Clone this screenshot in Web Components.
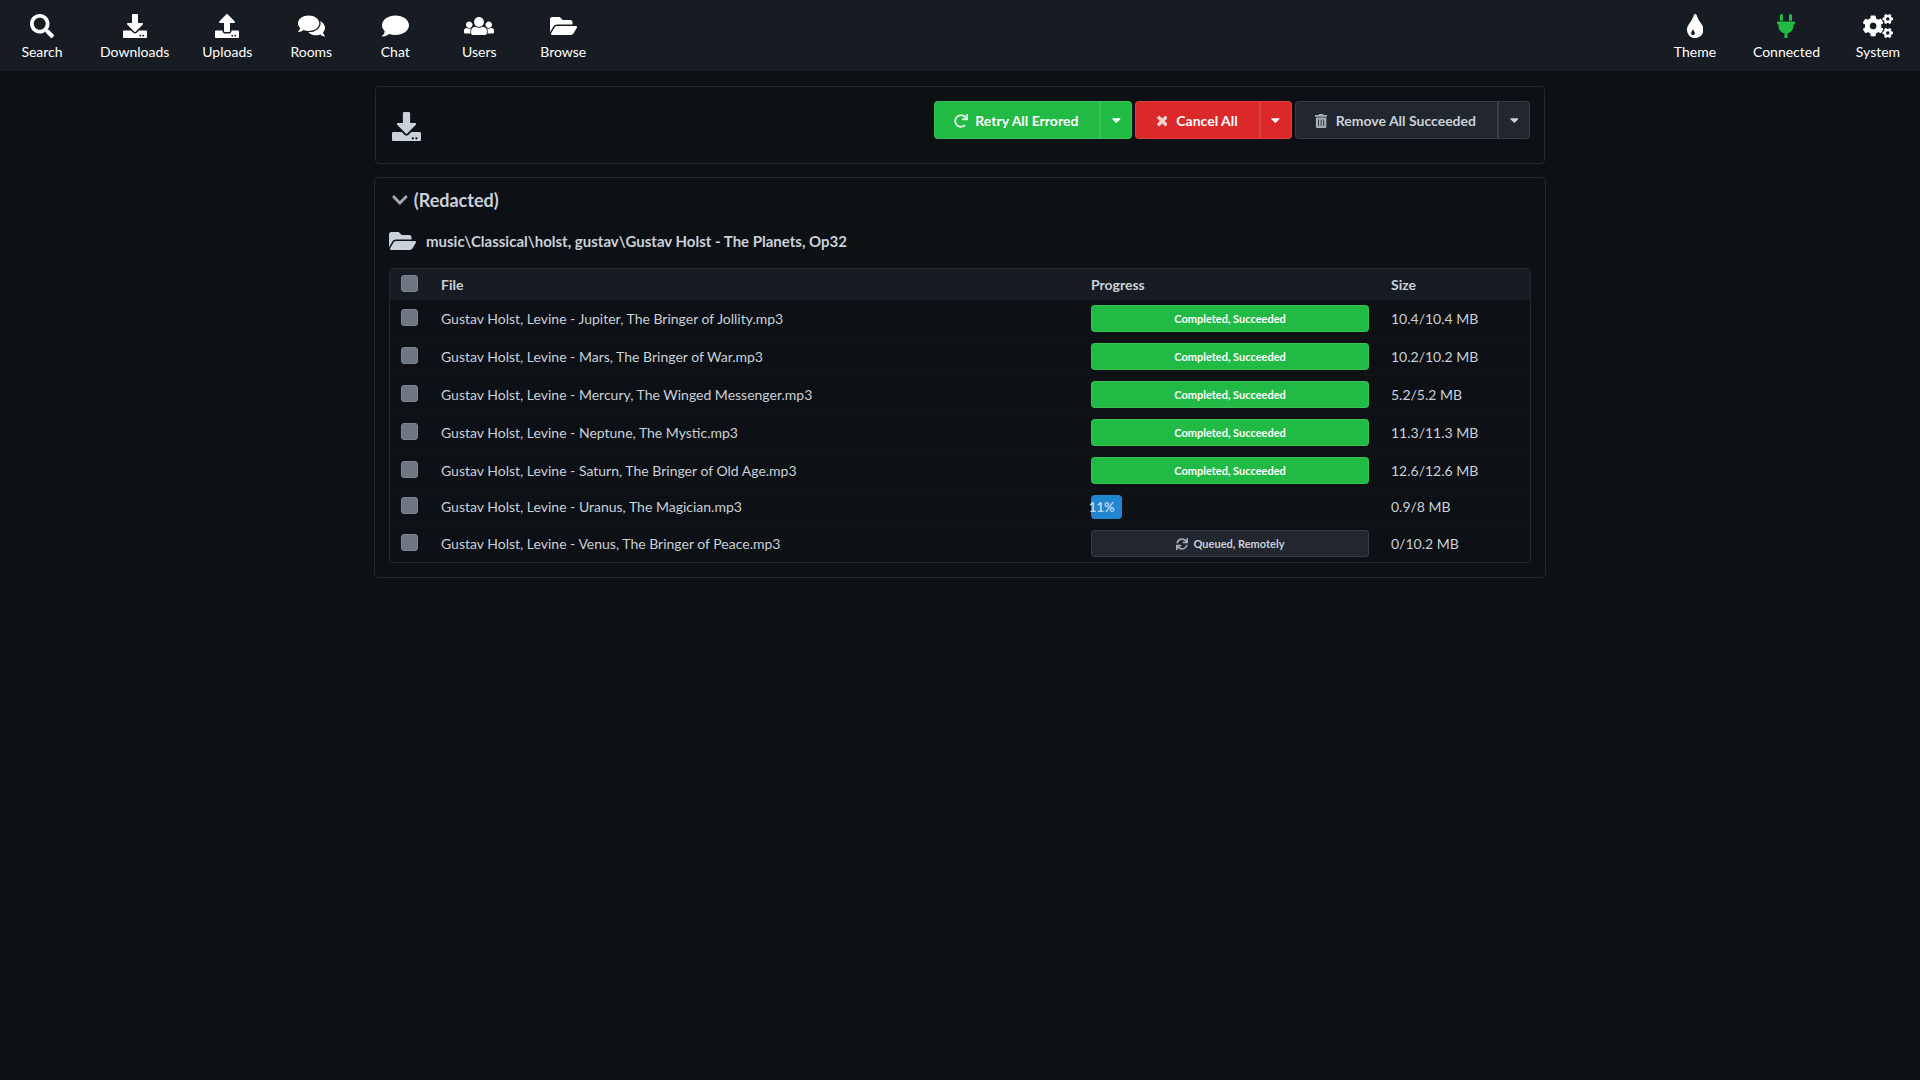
<!DOCTYPE html>
<html lang="en">
<head>
<meta charset="utf-8">
<meta name="viewport" content="width=device-width, initial-scale=1">
<title>Downloads</title>
<style>
  :root {
    --page: #0d1014;
    --raised: #171b22;
    --control: #22262e;
    --line: rgba(255, 255, 255, 0.1);
    --text: #c9d1d9;
    --green: #21ba45;
    --red: #db2828;
    --blue: #2185d0;
  }
  body {
    margin: 0;
    min-height: 100vh;
    background: var(--page);
    color: var(--text);
    font: 14px/18px Lato, "Liberation Sans", sans-serif;
  }
</style>
</head>
<body>
<app-shell>
  <nav-bar slot="nav">
    <nav-item icon="search" href="#search">Search</nav-item>
    <nav-item icon="download" href="#downloads">Downloads</nav-item>
    <nav-item icon="upload" href="#uploads">Uploads</nav-item>
    <nav-item icon="comments" href="#rooms">Rooms</nav-item>
    <nav-item icon="comment" href="#chat">Chat</nav-item>
    <nav-item icon="users" href="#users">Users</nav-item>
    <nav-item icon="folder" href="#browse">Browse</nav-item>
    <nav-item slot="end" icon="tint" href="#theme">Theme</nav-item>
    <nav-item slot="end" icon="plug" href="#connection" active>Connected</nav-item>
    <nav-item slot="end" icon="cogs" href="#system">System</nav-item>
  </nav-bar>
  <transfer-header>
    <split-button icon="redo" tone="green">Retry All Errored</split-button>
    <split-button icon="times" tone="red">Cancel All</split-button>
    <split-button icon="trash">Remove All Succeeded</split-button>
  </transfer-header>
  <user-card>
    <span slot="name">(Redacted)</span>
    <span slot="folder">music\Classical\holst, gustav\Gustav Holst - The Planets, Op32</span>
    <file-table></file-table>
  </user-card>
</app-shell>

<script>
const gear = 'M512.1 191l-8.2 14.3c-3 5.3-9.4 7.5-15.1 5.4-11.8-4.4-22.6-10.7-32.1-18.6-4.6-3.8-5.8-10.5-2.8-15.7l8.2-14.3c-6.9-8-12.3-17.3-15.9-27.4h-16.5c-6 0-11.2-4.3-12.2-10.3-2-12-2.1-24.6 0-37.1 1-6 6.2-10.4 12.2-10.4h16.5c3.6-10.1 9-19.4 15.9-27.4l-8.2-14.3c-3-5.2-1.9-11.9 2.8-15.7 9.5-7.9 20.4-14.2 32.1-18.6 5.7-2.1 12.1.1 15.1 5.4l8.2 14.3c10.5-1.9 21.2-1.9 31.7 0L552 6.3c3-5.3 9.4-7.5 15.1-5.4 11.8 4.4 22.6 10.7 32.1 18.6 4.6 3.8 5.8 10.5 2.8 15.7l-8.2 14.3c6.9 8 12.3 17.3 15.9 27.4h16.5c6 0 11.2 4.3 12.2 10.3 2 12 2.1 24.6 0 37.1-1 6-6.2 10.4-12.2 10.4h-16.5c-3.6 10.1-9 19.4-15.9 27.4l8.2 14.3c3 5.2 1.9 11.9-2.8 15.7-9.5 7.9-20.4 14.2-32.1 18.6-5.7 2.1-12.1-.1-15.1-5.4l-8.2-14.3c-10.4 1.9-21.2 1.9-31.7 0zm-10.5-58.8c38.5 29.6 82.4-14.3 52.8-52.8-38.5-29.7-82.4 14.3-52.8 52.8z';
const bubble = 'M576 240c0 115-129 208-288 208-48.3 0-93.9-8.6-133.9-23.8-40.3 31.2-89.8 50.3-142.4 55.7-5.2.6-10.2-2.8-11.5-7.7-1.3-5 2.7-8.1 6.6-11.8 19.3-18.4 42.7-32.8 51.9-94.6C21.9 330.9 0 287.3 0 240 0 125.1 129 32 288 32s288 93.1 288 208z';
const path = d => `<path d="${d}"/>`;

/* name: [view box width, drawing]; every icon is 512 units high */
const ICONS = {
  search: [512, path('M505 442.7L405.3 343c-4.5-4.5-10.6-7-17-7H372c27.6-35.3 44-79.7 44-128C416 93.1 322.9 0 208 0S0 93.1 0 208s93.1 208 208 208c48.3 0 92.7-16.4 128-44v16.3c0 6.4 2.5 12.5 7 17l99.7 99.7c9.4 9.4 24.6 9.4 33.9 0l28.3-28.3c9.4-9.4 9.4-24.6.1-34zM208 336c-70.7 0-128-57.2-128-128 0-70.7 57.2-128 128-128 70.7 0 128 57.2 128 128 0 70.7-57.2 128-128 128z')],
  download: [512, path('M216 0h80c13.3 0 24 10.7 24 24v168h87.7c17.8 0 26.7 21.5 14.1 34.1L269.7 378.3c-7.5 7.5-19.8 7.5-27.3 0L90.1 226.1c-12.6-12.6-3.7-34.1 14.1-34.1H192V24c0-13.3 10.7-24 24-24zm296 376v112c0 13.3-10.7 24-24 24H24c-13.3 0-24-10.7-24-24V376c0-13.3 10.7-24 24-24h146.7l49 49c20.1 20.1 52.5 20.1 72.6 0l49-49H488c13.3 0 24 10.7 24 24zm-124 88c0-11-9-20-20-20s-20 9-20 20 9 20 20 20 20-9 20-20zm64 0c0-11-9-20-20-20s-20 9-20 20 9 20 20 20 20-9 20-20z')],
  upload: [512, path('M296 384h-80c-13.3 0-24-10.7-24-24V192h-87.7c-17.8 0-26.7-21.5-14.1-34.1L242.3 5.7c7.5-7.5 19.8-7.5 27.3 0l152.2 152.2c12.6 12.6 3.7 34.1-14.1 34.1H320v168c0 13.3-10.7 24-24 24zm216-8v112c0 13.3-10.7 24-24 24H24c-13.3 0-24-10.7-24-24V376c0-13.3 10.7-24 24-24h136v8c0 30.9 25.1 56 56 56h80c30.9 0 56-25.1 56-56v-8h136c13.3 0 24 10.7 24 24zm-124 88c0-11-9-20-20-20s-20 9-20 20 9 20 20 20 20-9 20-20zm64 0c0-11-9-20-20-20s-20 9-20 20 9 20 20 20 20-9 20-20z')],
  comments: [576, `<mask id="m"><rect width="576" height="512" fill="#fff"/><path d="${bubble}" transform="translate(0 7) scale(.79)" fill="#000" stroke="#000" stroke-width="70"/></mask><path d="${bubble}" transform="translate(0 7) scale(.79)"/><g mask="url(#m)"><path d="${bubble}" transform="translate(576 106) scale(-.68 .78)"/></g>`],
  comment: [576, path(bubble)],
  users: [640, path('M320 64c57.99 0 105 47.01 105 105s-47.01 105-105 105-105-47.01-105-105S262.01 64 320 64zm113.463 217.366l-39.982-9.996c-49.168 35.365-108.766 27.473-146.961 0l-39.982 9.996C174.485 289.379 152 318.177 152 351.216V412c0 19.882 16.118 36 36 36h264c19.882 0 36-16.118 36-36v-60.784c0-33.039-22.485-61.837-54.537-69.85zM528 300c38.66 0 70-31.34 70-70s-31.34-70-70-70-70 31.34-70 70 31.34 70 70 70zm-416 0c38.66 0 70-31.34 70-70s-31.34-70-70-70-70 31.34-70 70 31.34 70 70 70zm24 112v-60.784c0-16.551 4.593-32.204 12.703-45.599-29.988 14.72-63.336 8.708-85.69-7.37l-26.655 6.664C14.99 310.252 0 329.452 0 351.477V392c0 13.255 10.745 24 24 24h112.169a52.417 52.417 0 0 1-.169-4zm467.642-107.09l-26.655-6.664c-27.925 20.086-60.89 19.233-85.786 7.218C499.369 318.893 504 334.601 504 351.216V412c0 1.347-.068 2.678-.169 4H616c13.255 0 24-10.745 24-24v-40.523c0-22.025-14.99-41.225-36.358-46.567z')],
  folder: [576, path('M572.694 292.093L500.27 416.248A63.997 63.997 0 0 1 444.989 448H45.025c-18.523 0-30.064-20.093-20.731-36.093l72.424-124.155A64 64 0 0 1 152 256h399.964c18.523 0 30.064 20.093 20.73 36.093zM152 224h328v-48c0-26.51-21.49-48-48-48H272l-64-64H48C21.49 64 0 85.49 0 112v278.046l69.077-118.418C86.214 242.25 117.989 224 152 224z')],
  tint: [352, '<path fill-rule="evenodd" d="M205.22 22.09c-7.94-28.78-49.44-30.12-58.44 0C100.01 179.85 0 222.72 0 333.91 0 432.35 78.72 512 176 512s176-79.65 176-178.09c0-111.75-99.79-153.34-146.78-311.82zM141 348c-4-13-22-13-26 0-8 25-27 38-27 62 0 22 18 38 40 38s40-16 40-38c0-24-19-37-27-62z"/>'],
  plug: [384, path('M256 144V32c0-17.673 14.327-32 32-32s32 14.327 32 32v112h-64zm112 16H16c-8.837 0-16 7.163-16 16v32c0 8.837 7.163 16 16 16h16v32c0 77.406 54.969 141.971 128 156.796V512h64v-99.204c73.031-14.825 128-79.39 128-156.796v-32h16c8.837 0 16-7.163 16-16v-32c0-8.837-7.163-16-16-16zm-240-16V32c0-17.673-14.327-32-32-32S64 14.327 64 32v112h64z')],
  cogs: [640, path(gear) + `<path d="${gear}" transform="translate(0 299)"/>` + path('M386.3 286.1l33.7 16.8c10.1 5.8 14.5 18.1 10.5 29.1-8.9 24.2-26.4 46.4-42.6 65.8-7.4 8.9-20.2 11.1-30.3 5.3l-29.1-16.8c-16 13.7-34.6 24.6-54.9 31.7v33.6c0 11.6-8.3 21.6-19.7 23.6-24.6 4.2-50.4 4.4-75.9 0-11.5-2-20-11.9-20-23.6V418c-20.3-7.2-38.9-18-54.9-31.7L74 403c-10 5.8-22.9 3.6-30.3-5.3-16.2-19.4-33.3-41.6-42.2-65.7-4-10.9.4-23.2 10.5-29.1l33.3-16.8c-3.9-20.9-3.9-42.4 0-63.4L12 205.8c-10.1-5.8-14.6-18.1-10.5-29 8.9-24.2 26-46.4 42.2-65.8 7.4-8.9 20.2-11.1 30.3-5.3l29.1 16.8c16-13.7 34.6-24.6 54.9-31.7V57.1c0-11.5 8.2-21.5 19.6-23.5 24.6-4.2 50.5-4.4 76-.1 11.5 2 20 11.9 20 23.6v33.6c20.3 7.2 38.9 18 54.9 31.7l29.1-16.8c10-5.8 22.9-3.6 30.3 5.3 16.2 19.4 33.2 41.6 42.1 65.8 4 10.9.1 23.2-10 29.1l-33.7 16.8c3.9 21 3.9 42.5 0 63.5zm-117.6 21.1c59.2-77-28.7-164.9-105.7-105.7-59.2 77 28.7 164.9 105.7 105.7z')],
  redo: [512, path('M500.33 0h-47.41a12 12 0 0 0-12 12.57l4 82.76A247.42 247.42 0 0 0 256 8C119.34 8 7.9 119.53 8 256.19 8.1 393.07 119.1 504 256 504a247.1 247.1 0 0 0 166.18-63.91 12 12 0 0 0 .48-17.43l-34-34a12 12 0 0 0-16.38-.55A176 176 0 1 1 402.1 157.8l-101.53-4.87a12 12 0 0 0-12.57 12v47.41a12 12 0 0 0 12 12h200.33a12 12 0 0 0 12-12V12a12 12 0 0 0-12-12z')],
  sync: [512, path('M440.65 12.57l4 82.77A247.16 247.16 0 0 0 255.83 8C134.73 8 33.91 94.92 12.29 209.82A12 12 0 0 0 24.09 224h49.05a12 12 0 0 0 11.67-9.26 175.91 175.91 0 0 1 317-56.94l-101.46-4.86a12 12 0 0 0-12.57 12v47.41a12 12 0 0 0 12 12H500a12 12 0 0 0 12-12V12a12 12 0 0 0-12-12h-47.37a12 12 0 0 0-11.98 12.57zM255.83 432a175.61 175.61 0 0 1-146-77.8l101.8 4.87a12 12 0 0 0 12.57-12v-47.4a12 12 0 0 0-12-12H12a12 12 0 0 0-12 12V500a12 12 0 0 0 12 12h47.35a12 12 0 0 0 12-12.6l-4.15-82.57A247.17 247.17 0 0 0 255.83 504c121.11 0 221.93-86.92 243.55-201.82a12 12 0 0 0-11.8-14.18h-49.05a12 12 0 0 0-11.67 9.26A175.86 175.86 0 0 1 255.83 432z')],
  times: [384, path('M323.1 441l53.9-53.9c9.4-9.4 9.4-24.5 0-33.9L279.8 256l97.2-97.2c9.4-9.4 9.4-24.5 0-33.9L323.1 71c-9.4-9.4-24.5-9.4-33.9 0L192 168.2 94.8 71c-9.4-9.4-24.5-9.4-33.9 0L7 124.9c-9.4 9.4-9.4 24.5 0 33.9l97.2 97.2L7 353.2c-9.4 9.4-9.4 24.5 0 33.9L60.9 441c9.4 9.4 24.5 9.4 33.9 0l97.2-97.2 97.2 97.2c9.3 9.3 24.5 9.3 33.9 0z')],
  trash: [448, path('M32 464a48 48 0 0 0 48 48h288a48 48 0 0 0 48-48V128H32zm272-256a16 16 0 0 1 32 0v224a16 16 0 0 1-32 0zm-96 0a16 16 0 0 1 32 0v224a16 16 0 0 1-32 0zm-96 0a16 16 0 0 1 32 0v224a16 16 0 0 1-32 0zM432 32H312l-9.4-18.7A24 24 0 0 0 281.1 0H166.8a23.72 23.72 0 0 0-21.4 13.3L136 32H16A16 16 0 0 0 0 48v32a16 16 0 0 0 16 16h416a16 16 0 0 0 16-16V48a16 16 0 0 0-16-16z')],
  chevron: [448, path('M207.029 381.476L12.686 187.132c-9.373-9.373-9.373-24.569 0-33.941l22.667-22.667c9.357-9.357 24.522-9.375 33.901-.04L224 284.505l154.745-154.021c9.379-9.335 24.544-9.317 33.901.04l22.667 22.667c9.373 9.373 9.373 24.569 0 33.941L240.971 381.476c-9.373 9.372-24.569 9.372-33.942 0z')],
  caret: [320, path('M31.3 192h257.3c17.8 0 26.7 21.5 14.1 34.1L174.1 354.8c-7.8 7.8-20.5 7.8-28.3 0L17.2 226.1C4.6 213.5 13.5 192 31.3 192z')]
};

function define(name, render) {
  customElements.define(name, class extends HTMLElement {
    constructor() {
      super();
      this.attachShadow({ mode: 'open' });
    }
    connectedCallback() {
      this.shadowRoot.innerHTML = render(this);
    }
  });
}

/* Icon: sized by --size, coloured by the text colour around it */
define('ui-icon', el => {
  const [width, drawing] = ICONS[el.getAttribute('name')];
  return `<style>
    :host { display: inline-flex; justify-content: center; flex: none; }
    svg { display: block; height: var(--size, 14px); fill: currentColor; }
  </style><svg viewBox="0 0 ${width} 512" aria-hidden="true">${drawing}</svg>`;
});

define('app-shell', () => `<style>
    :host { display: flex; flex-direction: column; align-items: center; gap: 15px; }
    slot[name=nav] { display: block; width: 100%; }
    main { display: flex; flex-direction: column; gap: 13px; width: calc(100% - 32px); max-width: 1170px; }
  </style>
  <slot name="nav"></slot>
  <main><slot></slot></main>`);

define('nav-bar', () => `<style>
    :host { display: block; }
    nav { display: flex; justify-content: space-between; background: var(--raised); }
    div { display: flex; }
  </style>
  <nav><div><slot></slot></div><div><slot name="end"></slot></div></nav>`);

define('nav-item', el => `<style>
    :host { display: block; color: #fff; }
    a {
      display: flex; flex-direction: column; align-items: center; gap: 5px;
      box-sizing: border-box; min-width: 84px; padding: 14px 16px 10px;
      color: inherit; text-decoration: none;
    }
    ui-icon { --size: 24px; }
    :host([active]) ui-icon { color: var(--green); }
  </style>
  <a href="${el.getAttribute('href')}"><ui-icon name="${el.getAttribute('icon')}"></ui-icon><span><slot></slot></span></a>`);

define('transfer-header', () => `<style>
    :host {
      display: flex; justify-content: space-between; align-items: flex-start;
      padding: 14px; border: 1px solid var(--line); border-radius: 4px;
      box-shadow: 0 1px 2px rgba(34, 36, 38, 0.15);
    }
    ui-icon { --size: 29px; padding: 11px 0 8px 2px; }
    div { display: flex; gap: 3px; }
  </style>
  <ui-icon name="download"></ui-icon>
  <div><slot></slot></div>`);

define('split-button', el => `<style>
    :host { display: flex; --fill: var(--control); color: var(--text); }
    :host([tone=green]) { --fill: var(--green); color: #fff; }
    :host([tone=red]) { --fill: var(--red); color: #fff; }
    button {
      display: flex; align-items: center; gap: 6px;
      height: 38px; margin: 0; padding: 2px 21px 0 17px;
      border: 1px solid var(--line); border-radius: 4px 0 0 4px;
      background-color: var(--fill); color: inherit; font: inherit; font-weight: 700;
    }
    button.more { justify-content: center; width: 32px; padding: 0; border-radius: 0 4px 4px 0; }
    button.main ui-icon { width: 17px; opacity: 0.8; }
  </style>
  <button class="main" type="button"><ui-icon name="${el.getAttribute('icon')}"></ui-icon><span><slot></slot></span></button>
  <button class="more" type="button" aria-label="More choices"><ui-icon name="caret"></ui-icon></button>`);

define('user-card', () => `<style>
    :host {
      display: block; margin: 0 -1px; padding: 10px 14px 14px;
      border: 1px solid var(--line); border-radius: 4px;
      box-shadow: 0 1px 2px rgba(34, 36, 38, 0.15);
    }
    h2, h3 { display: flex; align-items: center; margin: 0; font-weight: 700; }
    h2 { gap: 6px; padding-left: 3px; font-size: 18px; line-height: 24px; }
    h3 { gap: 10px; margin: 17px 0 15px; font-size: 15px; line-height: 24px; }
    h2 ui-icon { --size: 18px; opacity: 0.8; }
    h3 ui-icon { --size: 24px; }
  </style>
  <h2><ui-icon name="chevron"></ui-icon><slot name="name"></slot></h2>
  <h3><ui-icon name="folder"></ui-icon><slot name="folder"></slot></h3>
  <slot></slot>`);

define('transfer-status', el => {
  const percent = el.getAttribute('percent');
  const icon = el.getAttribute('icon');
  return `<style>
    :host { display: block; }
    button {
      display: flex; align-items: center; justify-content: center; gap: 6px;
      width: 100%; height: 27px; margin: 0; padding: 0;
      border: 1px solid var(--line); border-radius: 4px;
      background-color: var(--control); color: var(--text);
      font: inherit; font-size: 11px; font-weight: 700;
    }
    :host([done]) button { background-color: var(--green); color: #fff; }
    ui-icon { --size: 12px; opacity: 0.8; }
    .bar {
      display: flex; justify-content: flex-end; box-sizing: border-box;
      width: var(--percent); height: 24px; padding-right: 7px;
      border-radius: 4px; background: var(--blue);
      color: rgba(255, 255, 255, 0.7); font-size: 13px; line-height: 24px; font-weight: 700;
    }
  </style>` + (percent
    ? `<div class="bar" role="progressbar" aria-valuenow="${percent}" style="--percent:${percent}%"><slot></slot></div>`
    : `<button type="button">${icon ? `<ui-icon name="${icon}"></ui-icon>` : ''}<span><slot></slot></span></button>`);
});

const done = '<transfer-status done>Completed, Succeeded</transfer-status>';
const FILES = [
  ['Jupiter, The Bringer of Jollity', done, '10.4/10.4 MB'],
  ['Mars, The Bringer of War', done, '10.2/10.2 MB'],
  ['Mercury, The Winged Messenger', done, '5.2/5.2 MB'],
  ['Neptune, The Mystic', done, '11.3/11.3 MB'],
  ['Saturn, The Bringer of Old Age', done, '12.6/12.6 MB'],
  ['Uranus, The Magician', '<transfer-status percent="11">11%</transfer-status>', '0.9/8 MB'],
  ['Venus, The Bringer of Peace', '<transfer-status icon="sync">Queued, Remotely</transfer-status>', '0/10.2 MB']
];

define('file-table', () => `<style>
    :host { display: block; border: 1px solid var(--line); border-radius: 4px; overflow: hidden; }
    table { width: 100%; table-layout: fixed; border-collapse: separate; border-spacing: 0; }
    th, td { box-sizing: border-box; padding: 5px 11px; text-align: left; vertical-align: middle; }
    th { height: 31px; background: var(--raised); font-weight: 700; }
    tr + tr td { border-top: 1px solid rgba(255, 255, 255, 0.02); }
    .pick { width: 40px; padding-bottom: 8px; }
    .progress { width: 300px; }
    .size { width: 150px; }
    input {
      display: block; appearance: none; box-sizing: border-box;
      width: 17px; height: 17px; margin: 0;
      border: 1px solid #7d8590; border-radius: 3px; background: #6e7681;
    }
  </style>
  <table>
    <thead><tr>
      <th class="pick"><input type="checkbox" aria-label="Select all files"></th>
      <th>File</th><th class="progress">Progress</th><th class="size">Size</th>
    </tr></thead>
    <tbody>${FILES.map(([name, status, size], i) => `<tr>
      <td class="pick"><input type="checkbox" id="f${i}"></td>
      <td><label for="f${i}">Gustav Holst, Levine - ${name}.mp3</label></td>
      <td>${status}</td><td>${size}</td>
    </tr>`).join('')}</tbody>
  </table>`);
</script>
</body>
</html>
